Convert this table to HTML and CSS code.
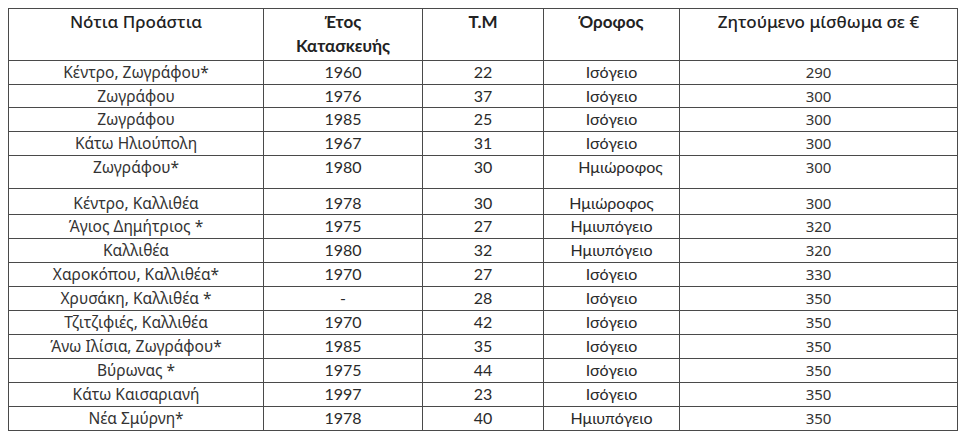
FILE: index.html
```html
<!DOCTYPE html>
<html lang="el">
<head>
<meta charset="utf-8">
<title>Νότια Προάστια</title>
<link rel="stylesheet" href="styles.css">
</head>
<body>
<table class="rent">
  <colgroup>
    <col class="c-area">
    <col class="c-year">
    <col class="c-sqm">
    <col class="c-floor">
    <col class="c-rent">
  </colgroup>
  <thead>
    <tr>
      <th class="area">Νότια Προάστια</th>
      <th class="mid">Έτος<br>Κατασκευής</th>
      <th class="mid">Τ.Μ</th>
      <th class="mid">Όροφος</th>
      <th class="area">Ζητούμενο μίσθωμα σε €</th>
    </tr>
  </thead>
  <tbody>
    <tr><td class="area">Κέντρο, Ζωγράφου*</td><td class="mid">1960</td><td class="mid">22</td><td class="mid">Ισόγειο</td><td class="area num">290</td></tr>
    <tr class="short"><td class="area">Ζωγράφου</td><td class="mid">1976</td><td class="mid">37</td><td class="mid">Ισόγειο</td><td class="area num">300</td></tr>
    <tr><td class="area">Ζωγράφου</td><td class="mid">1985</td><td class="mid">25</td><td class="mid">Ισόγειο</td><td class="area num">300</td></tr>
    <tr><td class="area">Κάτω Ηλιούπολη</td><td class="mid">1967</td><td class="mid">31</td><td class="mid">Ισόγειο</td><td class="area num">300</td></tr>
    <tr class="tall"><td class="area">Ζωγράφου*</td><td class="mid">1980</td><td class="mid">30</td><td class="mid shift">Ημιώροφος</td><td class="area num">300</td></tr>
    <tr><td class="area low">Κέντρο, Καλλιθέα</td><td class="mid low">1978</td><td class="mid low">30</td><td class="mid low">Ημιώροφος</td><td class="area num low">300</td></tr>
    <tr><td class="area">Άγιος Δημήτριος *</td><td class="mid">1975</td><td class="mid">27</td><td class="mid">Ημιυπόγειο</td><td class="area num">320</td></tr>
    <tr><td class="area">Καλλιθέα</td><td class="mid">1980</td><td class="mid">32</td><td class="mid">Ημιυπόγειο</td><td class="area num">320</td></tr>
    <tr><td class="area">Χαροκόπου, Καλλιθέα*</td><td class="mid">1970</td><td class="mid">27</td><td class="mid">Ισόγειο</td><td class="area num">330</td></tr>
    <tr><td class="area">Χρυσάκη, Καλλιθέα *</td><td class="mid">-</td><td class="mid">28</td><td class="mid">Ισόγειο</td><td class="area num">350</td></tr>
    <tr><td class="area">Τζιτζιφιές, Καλλιθέα</td><td class="mid">1970</td><td class="mid">42</td><td class="mid">Ισόγειο</td><td class="area num">350</td></tr>
    <tr><td class="area">Άνω Ιλίσια, Ζωγράφου*</td><td class="mid">1985</td><td class="mid">35</td><td class="mid">Ισόγειο</td><td class="area num">350</td></tr>
    <tr><td class="area">Βύρωνας *</td><td class="mid">1975</td><td class="mid">44</td><td class="mid">Ισόγειο</td><td class="area num">350</td></tr>
    <tr><td class="area">Κάτω Καισαριανή</td><td class="mid">1997</td><td class="mid">23</td><td class="mid">Ισόγειο</td><td class="area num">350</td></tr>
    <tr><td class="area">Νέα Σμύρνη*</td><td class="mid">1978</td><td class="mid">40</td><td class="mid">Ημιυπόγειο</td><td class="area num">350</td></tr>
  </tbody>
</table>
</body>
</html>
```
FILE: styles.css
```css
html, body {
  margin: 0;
  background: #ffffff;
}
body {
  padding: 8px;
  color: #333333;
}
.rent {
  border-collapse: collapse;
  table-layout: fixed;
  width: 949px;
}
.c-area { width: 255px; }
.c-year { width: 159px; }
.c-sqm { width: 121px; }
.c-floor { width: 136px; }
.c-rent { width: 278px; }

.rent th, .rent td {
  border: 1px solid #4a4a4a;
  padding: 0;
  text-align: center;
  vertical-align: top;
  white-space: nowrap;
}
.rent th {
  height: 50px;
  font-size: 17px;
  line-height: 24px;
  color: #222222;
  padding-top: 1px;
}
.rent th.area {
  font-family: "Noto Sans", "Open Sans", sans-serif;
  font-weight: 500;
}
.rent th.mid {
  font-family: Lato, "Liberation Sans", sans-serif;
  font-weight: 700;
}
.rent td {
  height: 23px;
  font-size: 15.5px;
  line-height: 22px;
}
.rent td.area {
  font-family: "Noto Sans", "Open Sans", sans-serif;
  color: #333333;
}
.rent td.num {
  font-size: 15px;
}
.rent td.mid {
  font-family: Lato, "Liberation Sans", sans-serif;
  font-size: 16px;
  color: #2a2a2a;
}
.rent tr.short td { height: 22px; }
.rent tr.tall td { height: 32px; }
.rent td.shift { padding-left: 18px; }
.rent td.low { padding-top: 3px; height: 22px; }
```
